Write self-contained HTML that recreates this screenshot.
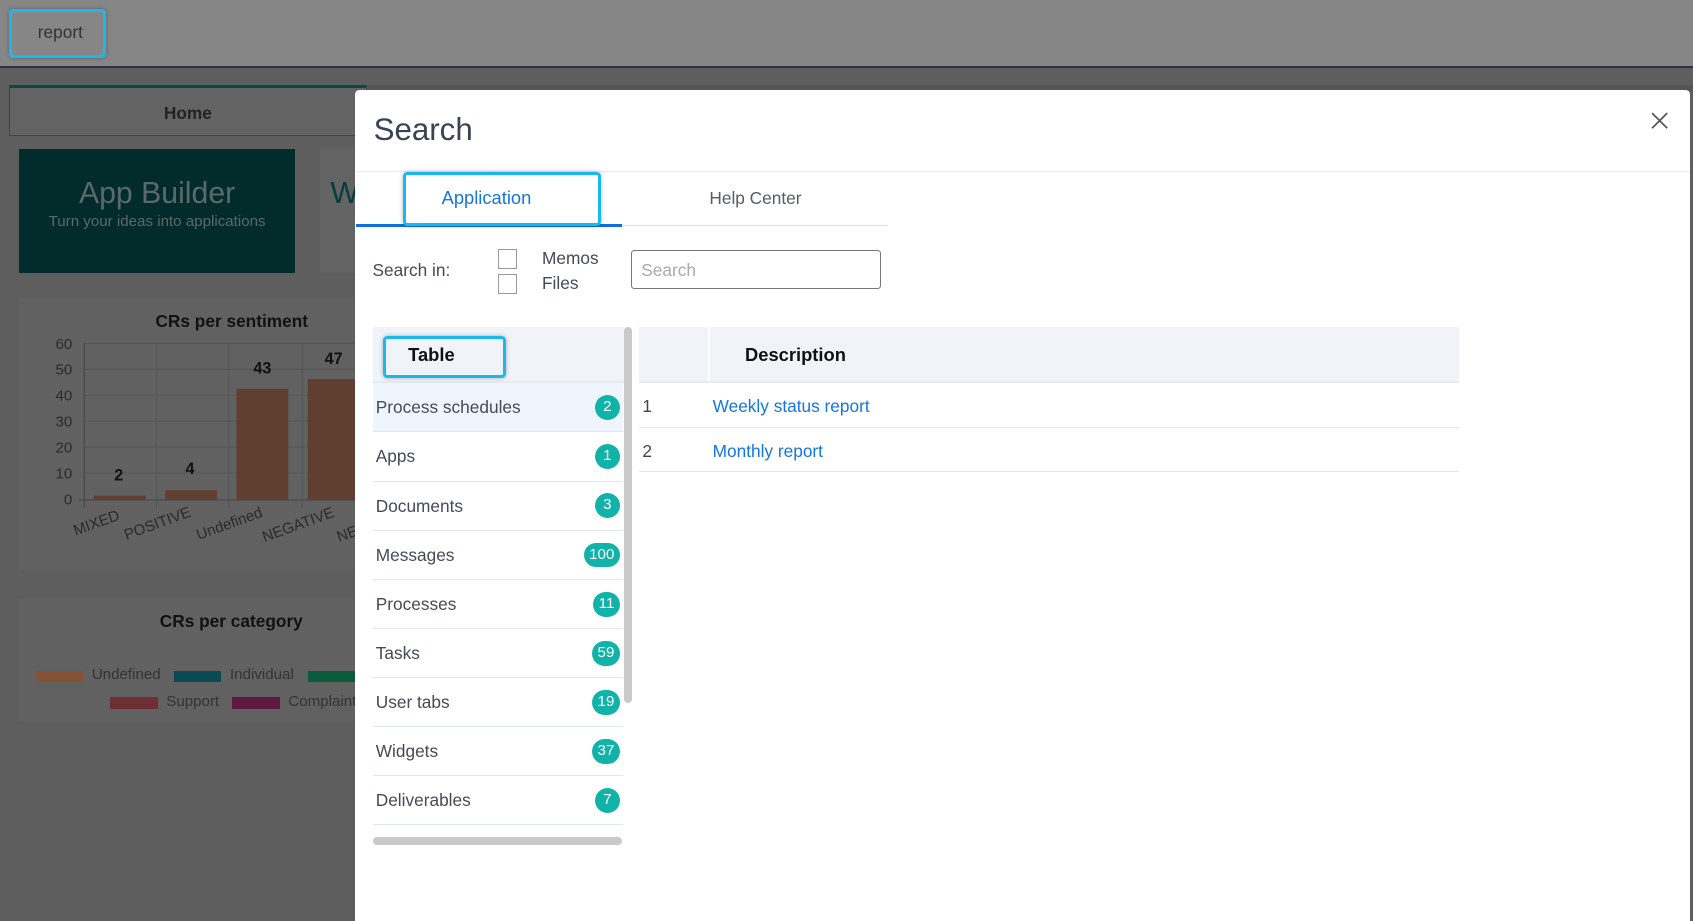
<!DOCTYPE html>
<html><head><meta charset="utf-8"><style>
*{box-sizing:border-box;margin:0;padding:0}
html,body{width:1693px;height:921px;overflow:hidden}
body{font-family:"Liberation Sans",sans-serif;background:#5e5e5e}
#w{position:relative;width:1568px;height:853px;zoom:1.07972;background:#5e5e5e}
.a{position:absolute}
.hl{position:absolute;border:3px solid #19b9f0;border-radius:4px;box-shadow:0 0 4px rgba(0,0,0,.3)}
.row{position:absolute;left:345px;width:232px;height:45.5px;border-bottom:1px solid #e3e6ea;font-size:16px;color:#444b55;padding-left:3px;line-height:45px}
.bd{position:absolute;right:3px;top:11px;height:23px;min-width:23px;border-radius:12px;background:#11b3a9;color:#fff;font-size:14px;text-align:center;line-height:23px;padding:0 5px}
</style></head><body><div id="w">
<div class="a" style="left:0;top:0;width:1568px;height:61px;background:#868686"></div>
<div class="a" style="left:0;top:61px;width:1568px;height:2px;background:#2d3348"></div>
<div class="hl" style="left:8px;top:8px;width:90px;height:46px;"></div>
<div class="a" style="left:35px;top:20px;font-size:16px;color:#333">report</div>
<div class="a" style="left:8px;top:79px;width:332px;height:47px;border:1px solid #444;border-top:3px solid #0b4a3a;background:#636363;text-align:center;font-weight:bold;font-size:16px;line-height:48px;color:#222">Home</div>
<div class="a" style="left:340px;top:79px;width:1228px;height:4px;background:#555"></div>
<div class="a" style="left:18px;top:138px;width:255px;height:115px;background:#022c2c;text-align:center;color:#5a6a6a">
<div style="font-size:28px;margin-top:26px">App Builder</div><div style="font-size:14px;margin-top:2px">Turn your ideas into applications</div></div>
<div class="a" style="left:296px;top:138px;width:40px;height:115px;background:#636363;color:#073c3c;font-size:28px;padding:26px 10px">W</div>
<div class="a" style="left:18px;top:277px;width:315px;height:252px;background:#616161"></div>
<div class="a" style="left:144px;top:288px;font-weight:bold;font-size:16px;color:#111">CRs per sentiment</div>
<svg class="a" style="left:0;top:300px" width="330" height="210">
<g stroke="#555" stroke-width="1">
<line x1="78" y1="18" x2="330" y2="18"/><line x1="78" y1="42" x2="330" y2="42"/><line x1="78" y1="66" x2="330" y2="66"/><line x1="78" y1="90" x2="330" y2="90"/><line x1="78" y1="114" x2="330" y2="114"/><line x1="78" y1="138" x2="330" y2="138"/>
<line x1="145" y1="18" x2="145" y2="170"/><line x1="212" y1="18" x2="212" y2="170"/><line x1="280" y1="18" x2="280" y2="170"/>
</g>
<line x1="78" y1="18" x2="78" y2="170" stroke="#444"/><line x1="72" y1="163" x2="330" y2="163" stroke="#444"/>
<g fill="#603f30"><rect x="87" y="159" width="48" height="4"/><rect x="153" y="154" width="48" height="9"/><rect x="219" y="60" width="48" height="103"/><rect x="285" y="51" width="48" height="112"/></g>
<g font-size="14" fill="#2a2a2a" font-family="Liberation Sans" text-anchor="end"><text x="67" y="23">60</text><text x="67" y="47">50</text><text x="67" y="71">40</text><text x="67" y="95">30</text><text x="67" y="119">20</text><text x="67" y="143">10</text><text x="67" y="167">0</text></g>
<g font-size="15" font-weight="bold" fill="#111" font-family="Liberation Sans" text-anchor="middle"><text x="110" y="145">2</text><text x="176" y="139">4</text><text x="243" y="46">43</text><text x="309" y="37">47</text></g>
<g font-size="14" fill="#2a2a2a" font-family="Liberation Sans"><text transform="translate(70,196) rotate(-20)">MIXED</text><text transform="translate(117,200) rotate(-20)">POSITIVE</text><text transform="translate(184,200) rotate(-20)">Undefined</text><text transform="translate(245,202) rotate(-20)">NEGATIVE</text><text transform="translate(314,202) rotate(-20)">NE</text></g>
</svg>
<div class="a" style="left:18px;top:555px;width:315px;height:113px;background:#616161"></div>
<div class="a" style="left:148px;top:566px;font-weight:bold;font-size:16px;color:#111">CRs per category</div>
<div class="a" style="left:33px;top:621px;width:44px;height:11px;background:#845237"></div><div class="a" style="left:85px;top:617px;font-size:14px;color:#333">Undefined</div>
<div class="a" style="left:161px;top:621px;width:44px;height:11px;background:#0a4a52"></div><div class="a" style="left:213px;top:617px;font-size:14px;color:#333">Individual</div>
<div class="a" style="left:285px;top:621px;width:44px;height:11px;background:#0b5a3c"></div>
<div class="a" style="left:102px;top:646px;width:44px;height:11px;background:#6e2e34"></div><div class="a" style="left:154px;top:642px;font-size:14px;color:#333">Support</div>
<div class="a" style="left:215px;top:646px;width:44px;height:11px;background:#5e1a3e"></div><div class="a" style="left:267px;top:642px;font-size:14px;color:#333">Complaint</div>

<div class="a" style="left:329px;top:83px;width:1236px;height:770px;background:#fff;border-radius:4px 4px 0 0"></div>
<div class="a" style="left:346px;top:104px;font-size:29px;color:#3a4356">Search</div>
<svg class="a" style="left:1529px;top:104px" width="16" height="16"><path d="M1 1L15 15M15 1L1 15" stroke="#555" stroke-width="1.6"/></svg>
<div class="a" style="left:330px;top:158px;width:1235px;height:1px;background:#e9ecef"></div>
<div class="a" style="left:576px;top:208px;width:246px;height:1px;background:#dde1e5"></div>
<div class="a" style="left:330px;top:207px;width:246px;height:3px;background:#0f6fde"></div>
<div class="a" style="left:409px;top:173px;font-size:17px;color:#1476e0">Application</div>
<div class="a" style="left:657px;top:174px;font-size:16px;color:#555c66">Help Center</div>
<div class="hl" style="left:373px;top:159px;width:184px;height:50px"></div>
<div class="a" style="left:345px;top:241px;font-size:16px;color:#444b55">Search in:</div>
<div class="a" style="left:461px;top:231px;width:18px;height:18px;border:1px solid #999"></div>
<div class="a" style="left:461px;top:254px;width:18px;height:18px;border:1px solid #999"></div>
<div class="a" style="left:502px;top:230px;font-size:16px;color:#444b55">Memos</div>
<div class="a" style="left:502px;top:253px;font-size:16px;color:#444b55">Files</div>
<div class="a" style="left:584px;top:232px;width:232px;height:36px;border:1px solid #777;border-radius:3px;font-size:16px;color:#aaa;padding:8px 9px">Search</div>

<div class="a" style="left:345px;top:303px;width:233px;height:52px;background:#f0f4f8;border-bottom:2px solid #e6ebf0"></div>
<div class="a" style="left:378px;top:319px;font-size:17px;font-weight:bold;color:#111">Table</div>
<div class="hl" style="left:355px;top:311px;width:114px;height:39px"></div>
<div class="row" style="top:355px;background:#eef5fd">Process schedules<span class="bd">2</span></div>
<div class="row" style="top:400.5px">Apps<span class="bd">1</span></div>
<div class="row" style="top:446px">Documents<span class="bd">3</span></div>
<div class="row" style="top:491.5px">Messages<span class="bd">100</span></div>
<div class="row" style="top:537px">Processes<span class="bd">11</span></div>
<div class="row" style="top:582.5px">Tasks<span class="bd">59</span></div>
<div class="row" style="top:628px">User tabs<span class="bd">19</span></div>
<div class="row" style="top:673.5px">Widgets<span class="bd">37</span></div>
<div class="row" style="top:719px">Deliverables<span class="bd">7</span></div>
<div class="a" style="left:578px;top:303px;width:7px;height:348px;background:#c9c9c9;border-radius:4px"></div>
<div class="a" style="left:345px;top:775px;width:231px;height:8px;background:#c9c9c9;border-radius:4px"></div>

<div class="a" style="left:592px;top:303px;width:759px;height:52px;background:#f0f4f8;border-bottom:2px solid #e6ebf0"></div>
<div class="a" style="left:656px;top:303px;width:2px;height:50px;background:#fff"></div>
<div class="a" style="left:690px;top:319px;font-size:17px;font-weight:bold;color:#111">Description</div>
<div class="a" style="left:592px;top:355px;width:759px;height:41px;border-bottom:1px solid #e3e6ea"></div>
<div class="a" style="left:592px;top:396px;width:759px;height:41px;border-bottom:1px solid #e3e6ea"></div>
<div class="a" style="left:595px;top:367px;font-size:16px;color:#444">1</div>
<div class="a" style="left:595px;top:408px;font-size:16px;color:#444">2</div>
<div class="a" style="left:660px;top:367px;font-size:16px;color:#1476e0">Weekly status report</div>
<div class="a" style="left:660px;top:408px;font-size:16px;color:#1476e0">Monthly report</div>
</div></body></html>
